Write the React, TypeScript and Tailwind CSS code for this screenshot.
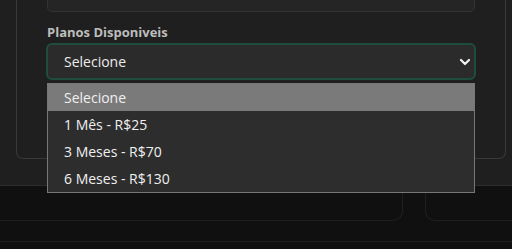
import React from 'react';

const options = ['Selecione', '1 Mês - R$25', '3 Meses - R$70', '6 Meses - R$130'];

const Chevron: React.FC = () => (
  <svg width="12" height="8" viewBox="0 0 12 8" fill="none">
    <path d="M2 2 L6 6 L10 2" stroke="#f2f2f2" strokeWidth="2.2" strokeLinecap="round" strokeLinejoin="round" />
  </svg>
);

const App: React.FC = () => {
  return (
    <div
      className="w-[512px] h-[249px] overflow-hidden bg-[#101010] relative"
      style={{ fontFamily: '"Open Sans", "Noto Sans", sans-serif' }}
    >
      {/* Top panel */}
      <div className="h-[186px] bg-[#1f1f1f] border-b border-[#2c2c2c]">
        <div className="ml-[16px] w-[490px] border border-t-0 border-[#393939] rounded-b-[7px] pl-[30px] pb-[78px]">
          <div className="w-[428px] h-[12px] bg-[#252525] border border-t-0 border-[#333333] rounded-b-[5px]" />

          <div className="mt-[12px] text-[13px] leading-[16px] font-bold text-[#bdbdbd]">
            Planos Disponiveis
          </div>

          <div className="relative mt-[3px] w-[430px] h-[37px] -ml-[1px] bg-[#2b2b2b] border-2 border-[#1e4d3f] rounded-[6px] flex items-center justify-between pl-[16px] pr-[3px]">
            <span className="text-[14px] text-[#ececec]">Selecione</span>
            <Chevron />

            {/* Open dropdown */}
            <div className="absolute left-[-1px] top-[38px] w-[428px] bg-[#2d2d2d] border border-[#777777] z-10">
              {options.map((o, i) => (
                <div
                  key={o}
                  className={`h-[27px] flex items-center pl-[16px] text-[14px] text-[#f0f0f0] ${
                    i === 0 ? 'bg-[#7a7a7a]' : ''
                  }`}
                >
                  {o}
                </div>
              ))}
            </div>
          </div>
        </div>
      </div>

      {/* Bottom area */}
      <div className="flex gap-[22px] -ml-[10px] h-[35px]">
        <div className="w-[413px] shrink-0 border border-t-0 border-[#202020] rounded-b-[10px]" />
        <div className="w-[120px] shrink-0 border border-t-0 border-[#202020] rounded-b-[10px]" />
      </div>
      <div className="mt-[20px] border-t border-[#1f1f1f]" />
    </div>
  );
};

export default App;
